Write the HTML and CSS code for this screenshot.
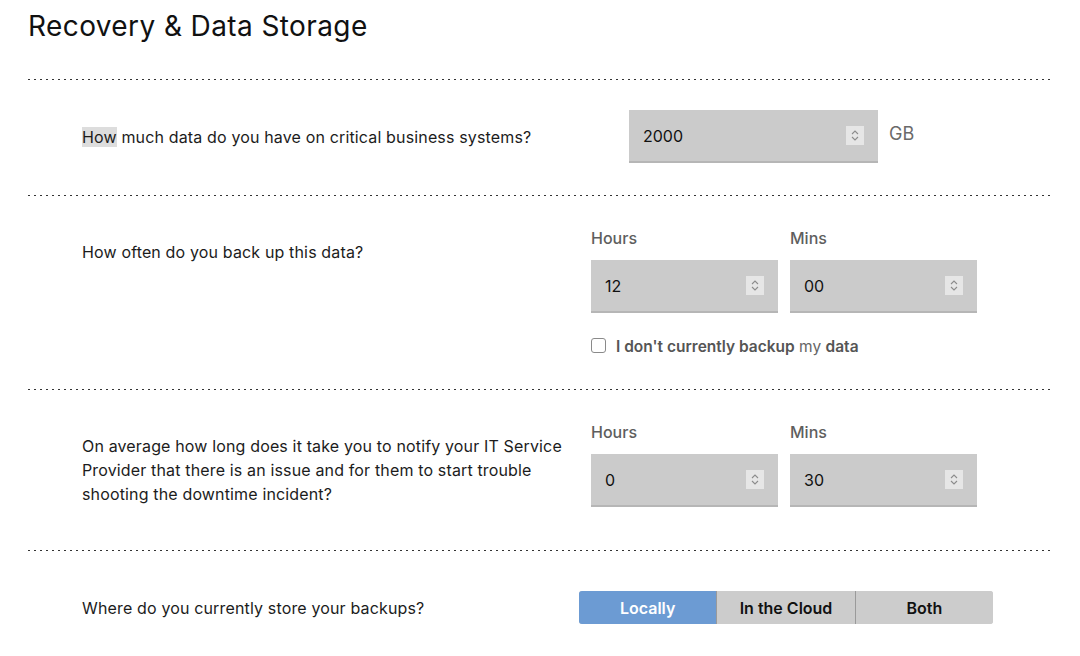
FILE: index.html
```html
<!DOCTYPE html>
<html lang="en">
<head>
<meta charset="utf-8">
<title>Recovery &amp; Data Storage</title>
<link rel="stylesheet" href="styles.css">
</head>
<body>
<div class="page">
  <h1 class="title">Recovery &amp; Data Storage</h1>
  <div class="divider"></div>

  <section class="row row-data">
    <p class="q"><span class="hl">How</span> much data do you have on critical business systems?</p>
    <div class="right right-data">
      <div class="field field-wide">
        <span class="val">2000</span>
        <svg class="spin" width="18" height="19" viewBox="0 0 18 19"><path d="M6 8 L9 5 L12 8 M6 11 L9 14 L12 11" fill="none" stroke="#8c8c8c" stroke-width="1.1"/></svg>
      </div>
      <span class="unit">GB</span>
    </div>
  </section>
  <div class="divider"></div>

  <section class="row row-time">
    <p class="q q-top">How often do you back up this data?</p>
    <div class="right right-time">
      <div class="pair">
        <div class="col">
          <span class="lbl">Hours</span>
          <div class="field">
            <span class="val">12</span>
            <svg class="spin" width="18" height="19" viewBox="0 0 18 19"><path d="M6 8 L9 5 L12 8 M6 11 L9 14 L12 11" fill="none" stroke="#8c8c8c" stroke-width="1.1"/></svg>
          </div>
        </div>
        <div class="col">
          <span class="lbl">Mins</span>
          <div class="field">
            <span class="val">00</span>
            <svg class="spin" width="18" height="19" viewBox="0 0 18 19"><path d="M6 8 L9 5 L12 8 M6 11 L9 14 L12 11" fill="none" stroke="#8c8c8c" stroke-width="1.1"/></svg>
          </div>
        </div>
      </div>
      <label class="check">
        <span class="box"></span>
        <span class="check-text"><b>I don't currently backup</b> my <b>data</b></span>
      </label>
    </div>
  </section>
  <div class="divider"></div>

  <section class="row row-time row-notify">
    <p class="q q-top">On average how long does it take you to notify your IT Service Provider that there is an issue and for them to start trouble shooting the downtime incident?</p>
    <div class="right right-time">
      <div class="pair">
        <div class="col">
          <span class="lbl">Hours</span>
          <div class="field">
            <span class="val">0</span>
            <svg class="spin" width="18" height="19" viewBox="0 0 18 19"><path d="M6 8 L9 5 L12 8 M6 11 L9 14 L12 11" fill="none" stroke="#8c8c8c" stroke-width="1.1"/></svg>
          </div>
        </div>
        <div class="col">
          <span class="lbl">Mins</span>
          <div class="field">
            <span class="val">30</span>
            <svg class="spin" width="18" height="19" viewBox="0 0 18 19"><path d="M6 8 L9 5 L12 8 M6 11 L9 14 L12 11" fill="none" stroke="#8c8c8c" stroke-width="1.1"/></svg>
          </div>
        </div>
      </div>
    </div>
  </section>
  <div class="divider"></div>

  <section class="row row-store">
    <p class="q">Where do you currently store your backups?</p>
    <div class="seg">
      <span class="seg-btn active">Locally</span>
      <span class="seg-btn">In the Cloud</span>
      <span class="seg-btn">Both</span>
    </div>
  </section>
</div>
</body>
</html>
```

FILE: styles.css
```css
* { box-sizing: border-box; }
html, body { margin: 0; padding: 0; background: #fff; }
body {
  font-family: Inter, "Noto Sans", "Liberation Sans", sans-serif;
  color: #1a1a1a;
  width: 1080px;
  height: 656px;
  overflow: hidden;
}
.page { padding: 0 28px; width: 1080px; }

.title {
  margin: 0;
  padding-top: 9px;
  height: 79px;
  font-size: 28px;
  line-height: 34px;
  font-weight: 400;
  color: #111;
  letter-spacing: 0.4px;
}

.divider {
  height: 1px;
  width: 1024px;
  background-image: linear-gradient(to right, #333 2px, transparent 2px);
  background-size: 6px 1px;
  background-repeat: repeat-x;
}

.row {
  display: flex;
  padding-left: 54px;
}
.q {
  margin: 0;
  width: 497px;
  flex: none;
  font-size: 16px;
  line-height: 24px;
  letter-spacing: 0.15px;
  color: #1c1c1c;
}
.q-top { padding-top: 13px; margin-right: 12px; }
.hl { background: #dddddd; }

/* row 1 */
.row-data { padding-top: 30px; padding-bottom: 32px; align-items: center; }
.right { display: flex; }
.right-data { margin-left: 50px; align-items: flex-start; }
.unit {
  margin-left: 11px;
  margin-top: 12px;
  font-size: 18px;
  line-height: 24px;
  color: #6a6a6a;
}

.field {
  width: 187px;
  height: 53px;
  background: #cbcbcb;
  border-bottom: 2px solid #b6b6b6;
  display: flex;
  align-items: center;
  justify-content: space-between;
  padding: 0 14px 0 14px;
  font-size: 16px;
  color: #111;
}
.field-wide { width: 249px; }
.val { line-height: 20px; }
.spin {
  display: block;
  background: #e6e6e6;
  flex: none;
}

/* time rows */
.row-time { padding-top: 31px; padding-bottom: 32px; align-items: flex-start; }
.row-notify { padding-bottom: 43px; }
.right-time { flex-direction: column; }
.pair { display: flex; gap: 12px; }
.col { display: flex; flex-direction: column; }
.lbl {
  font-size: 16px;
  line-height: 22px;
  font-weight: 500;
  color: #5e5e5e;
  margin-bottom: 11px;
}

.check {
  display: flex;
  align-items: center;
  margin-top: 22px;
  height: 22px;
}
.box {
  width: 15px;
  height: 15px;
  border: 1px solid #8a8a8a;
  border-radius: 3px;
  background: #fff;
  margin-right: 10px;
  margin-top: -2px;
}
.check-text {
  font-size: 15.5px;
  color: #666;
  font-weight: 400;
}
.check-text b { font-weight: 600; color: #555; }

/* store row */
.row-store { padding-top: 40px; align-items: center; }
.seg {
  display: flex;
  width: 414px;
  height: 33px;
  border-radius: 3px;
  overflow: hidden;
  background: #cccccc;
}
.seg-btn {
  flex: 1;
  display: flex;
  align-items: center;
  justify-content: center;
  font-size: 16px;
  font-weight: 600;
  color: #111;
  background: #cccccc;
}
.seg-btn + .seg-btn { border-left: 1px solid #9a9a9a; }
.seg-btn.active { background: #6c9bd3; color: #fff; }
```
